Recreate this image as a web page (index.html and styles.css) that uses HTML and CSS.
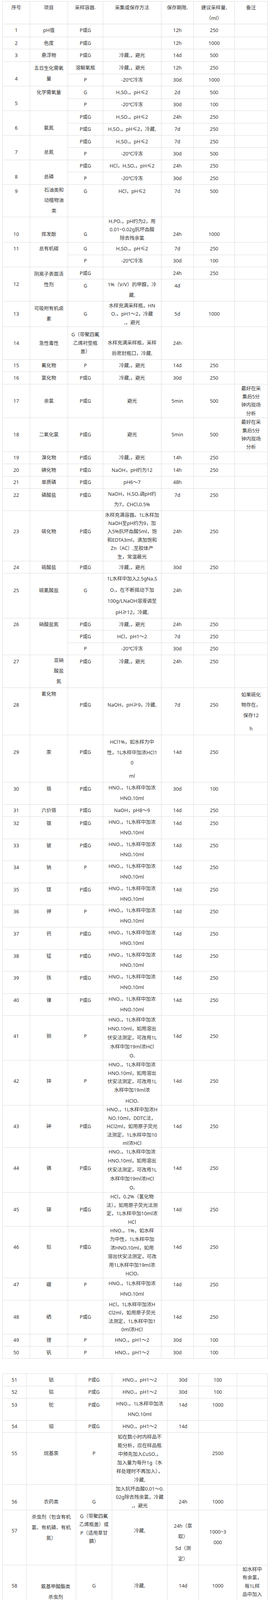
FILE: index.html
```html
<!DOCTYPE html>
<html lang="zh-CN">
<head>
<meta charset="utf-8">
<title>水样的保存和采样要求</title>
<link rel="stylesheet" href="styles.css">
</head>
<body>
<table class="tb t1">
<colgroup><col class="a1"><col class="a2"><col class="a3"><col class="a4"><col class="a5"><col class="a6"><col class="a7"></colgroup>
<tr><th>序号</th><th>项目</th><th>采样容器<sub>1</sub></th><th>采集或保存方法</th><th>保存期限<sub>2</sub></th><th>建议采样量<sub>3</sub><br>（ml）</th><th>备注</th></tr>
<tr class="r1"><td>1</td><td>pH值</td><td>P或G</td><td></td><td>12h</td><td>250</td><td></td></tr>
<tr><td>2</td><td>色度</td><td>P或G</td><td></td><td>12h</td><td>1000</td><td></td></tr>
<tr><td>3</td><td>悬浮物</td><td>P或G</td><td>冷藏<sub>a</sub>，避光</td><td>14d</td><td>500</td><td></td></tr>
<tr><td rowspan="2" class="bt">4</td><td rowspan="2" class="w">五日生化需氧<br>量</td><td>溶解氧瓶</td><td>冷藏<sub>a</sub>，避光</td><td>12h</td><td>250</td><td></td></tr>
<tr><td>P</td><td>-20℃冷冻</td><td>30d</td><td>1000</td><td></td></tr>
<tr><td rowspan="2" class="bt">5</td><td rowspan="2" class="tt">化学需氧量</td><td>G</td><td>H<sub>2</sub>SO<sub>4</sub>，pH≤2</td><td>2d</td><td>500</td><td></td></tr>
<tr><td>P</td><td>-20℃冷冻</td><td>30d</td><td>100</td><td></td></tr>
<tr><td rowspan="2" class="bt">6</td><td rowspan="2" class="bt">氨氮</td><td>P或G</td><td>H<sub>2</sub>SO<sub>4</sub>，pH≤2</td><td>24h</td><td>250</td><td></td></tr>
<tr><td>P或G</td><td>H<sub>2</sub>SO<sub>4</sub>，pH≤2，冷藏<sub>a</sub></td><td>7d</td><td>250</td><td></td></tr>
<tr><td rowspan="2" class="bt">7</td><td rowspan="2" class="bt">总氮</td><td>P或G</td><td>H<sub>2</sub>SO<sub>4</sub>，pH≤2</td><td>7d</td><td>250</td><td></td></tr>
<tr><td>P</td><td>-20℃冷冻</td><td>30d</td><td>500</td><td></td></tr>
<tr><td rowspan="2" class="bt">8</td><td rowspan="2" class="bt">总磷</td><td>P或G</td><td>HCl，H<sub>2</sub>SO<sub>4</sub>，pH≤2</td><td>24h</td><td>250</td><td></td></tr>
<tr><td>P</td><td>-20℃冷冻</td><td>30d</td><td>250</td><td></td></tr>
<tr class="t"><td>9</td><td class="w n rb"><span class="ib">石油类和<br>动植物油<br>类</span></td><td>G</td><td>HCl，pH≤2</td><td>7d</td><td>500</td><td></td></tr>
<tr class="r33"><td>10</td><td>挥发酚</td><td>G</td><td class="n">H<sub>3</sub>PO<sub>4</sub>，pH约为2，用<br>0.01~0.02g抗坏血酸<br>除去残余氯</td><td>24h</td><td>1000</td><td></td></tr>
<tr><td rowspan="2" class="tt">11</td><td rowspan="2" class="tt">总有机碳</td><td>G</td><td>H<sub>2</sub>SO<sub>4</sub>，pH≤2</td><td>7d</td><td>250</td><td></td></tr>
<tr><td>P</td><td>-20℃冷冻</td><td>30d</td><td>100</td><td></td></tr>
<tr><td rowspan="2">12</td><td rowspan="2" class="tt w">阴离子表面活<br>性剂</td><td>P或G</td><td></td><td>24h</td><td>250</td><td></td></tr>
<tr class="t"><td>G</td><td class="w n">1%（V/V）的甲醛，冷<br>藏<sub>a</sub></td><td>4d</td><td></td><td></td></tr>
<tr><td>13</td><td class="w">可吸附有机卤<br>素</td><td>G</td><td class="n">水样充满采样瓶，HN<br>O<sub>3</sub>，pH1～2，冷藏<br><sub>a</sub>，避光</td><td>5d</td><td>1000</td><td></td></tr>
<tr><td>14</td><td>急性毒性</td><td class="n">G（带聚四氟<br>乙烯衬垫瓶<br>盖）</td><td class="w n">&nbsp;<br>水样充满采样瓶，采样<br>后密封瓶口，冷藏<sub>a</sub></td><td>24h</td><td></td><td></td></tr>
<tr><td>15</td><td>氟化物</td><td>P</td><td>冷藏<sub>a</sub>，避光</td><td>14d</td><td>250</td><td></td></tr>
<tr><td>16</td><td>氯化物</td><td>P或G</td><td>冷藏<sub>a</sub>，避光</td><td>30d</td><td>250</td><td></td></tr>
<tr><td>17</td><td>余氯</td><td>P或G</td><td>避光</td><td>5min</td><td>500</td><td class="n">最好在采<br>集后5分<br>钟内现场<br>分析</td></tr>
<tr><td>18</td><td>二氧化氯</td><td>P或G</td><td>避光</td><td>5min</td><td>500</td><td class="n">最好在采<br>集后5分<br>钟内现场<br>分析</td></tr>
<tr><td>19</td><td>溴化物</td><td>P或G</td><td>冷藏<sub>a</sub>，避光</td><td>14h</td><td>250</td><td></td></tr>
<tr><td>20</td><td>碘化物</td><td>P或G</td><td>NaOH，pH约为12</td><td>14h</td><td>250</td><td></td></tr>
<tr><td>21</td><td>单质磷</td><td>P或G</td><td>pH6～7</td><td>48h</td><td></td><td></td></tr>
<tr class="t"><td>22</td><td>磷酸盐</td><td>P或G</td><td class="w n">NaOH，H<sub>2</sub>SO<sub>4</sub>调pH约<br>为7，CHCl<sub>3</sub>0.5%</td><td>7d</td><td>250</td><td></td></tr>
<tr class="r42"><td>23</td><td>硫化物</td><td>P或G</td><td class="n">水样充满容器。1L水样加<br>NaOH至pH约为9，加<br>入5%抗坏血酸5ml，饱<br>和EDTA3ml，滴加饱和<br>Zn（AC）<sub>2</sub>至胶体产<br>生，常温蔽光</td><td>24h</td><td>250</td><td></td></tr>
<tr><td>24</td><td>硫酸盐</td><td>P或G</td><td>冷藏<sub>a</sub>，避光</td><td>30d</td><td>250</td><td></td></tr>
<tr class="r33"><td>25</td><td>硫氰酸盐</td><td>G</td><td class="x n">1L水样中加入2.5gNa<sub>2</sub>S<br>O<sub>3</sub>，在不断摇动下加<br>100g/LNaOH溶液调至<br>pH≥12，冷藏<sub>a</sub></td><td>24h</td><td></td><td></td></tr>
<tr><td rowspan="3" class="tt">26</td><td rowspan="3" class="tt">硝酸盐氮</td><td>P或G</td><td>冷藏<sub>a</sub>，避光</td><td>24h</td><td>250</td><td></td></tr>
<tr><td>P或G</td><td>HCl，pH1～2</td><td>7d</td><td>250</td><td></td></tr>
<tr><td>P</td><td>-20℃冷冻</td><td>30d</td><td>250</td><td></td></tr>
<tr class="t"><td>27</td><td class="w n rb"><span class="ib">亚硝<br>酸盐<br>氮</span></td><td>P或G</td><td>冷藏<sub>a</sub>，避光</td><td>24h</td><td>250</td><td></td></tr>
<tr class="r33"><td>28</td><td class="tt">氰化物</td><td>P或G</td><td>NaOH，pH≥9，冷藏<sub>a</sub></td><td>7d</td><td>250</td><td class="w n pt">如果硫化<br>物存在，<br>保存12<span class="gap">h</span></td></tr>
<tr class="r33"><td>29</td><td>汞</td><td>P或G</td><td class="w n pt">HCl1%，如水样为中<br>性，1L水样中加浓HCl1<br>0<span class="gap">ml</span></td><td>14d</td><td>250</td><td></td></tr>
<tr class="t"><td>30</td><td>铬</td><td>P或G</td><td class="w n">HNO<sub>3</sub>，1L水样中加浓<br>HNO<sub>3</sub>10ml</td><td>30d</td><td>100</td><td></td></tr>
<tr><td>31</td><td>六价铬</td><td>P或G</td><td>NaOH，pH8～9</td><td>14d</td><td>250</td><td></td></tr>
<tr class="t"><td>32</td><td>银</td><td>P或G</td><td class="w n">HNO<sub>3</sub>，1L水样中加浓<br>HNO<sub>3</sub>10ml</td><td>14d</td><td>250</td><td></td></tr>
<tr class="t"><td>33</td><td>铍</td><td>P或G</td><td class="w n">HNO<sub>3</sub>，1L水样中加浓<br>HNO<sub>3</sub>10ml</td><td>14d</td><td>250</td><td></td></tr>
<tr class="t"><td>34</td><td>钠</td><td>P</td><td class="w n">HNO<sub>3</sub>，1L水样中加浓<br>HNO<sub>3</sub>10ml</td><td>14d</td><td>250</td><td></td></tr>
<tr class="t"><td>35</td><td>镁</td><td>P或G</td><td class="w n">HNO<sub>3</sub>，1L水样中加浓<br>HNO<sub>3</sub>10ml</td><td>14d</td><td>250</td><td></td></tr>
<tr class="t"><td>36</td><td>钾</td><td>P</td><td class="w n">HNO<sub>3</sub>，1L水样中加浓<br>HNO<sub>3</sub>10ml</td><td>14d</td><td>250</td><td></td></tr>
<tr class="t"><td>37</td><td>钙</td><td>P或G</td><td class="w n">HNO<sub>3</sub>，1L水样中加浓<br>HNO<sub>3</sub>10ml</td><td>14d</td><td>250</td><td></td></tr>
<tr class="t"><td>38</td><td>锰</td><td>P或G</td><td class="w n">HNO<sub>3</sub>，1L水样中加浓<br>HNO<sub>3</sub>10ml</td><td>14d</td><td>250</td><td></td></tr>
<tr class="t"><td>39</td><td>铁</td><td>P或G</td><td class="w n">HNO<sub>3</sub>，1L水样中加浓<br>HNO<sub>3</sub>10ml</td><td>14d</td><td>250</td><td></td></tr>
<tr class="t"><td>40</td><td>镍</td><td>P或G</td><td class="w n">HNO<sub>3</sub>，1L水样中加浓<br>HNO<sub>3</sub>10ml</td><td>14d</td><td>250</td><td></td></tr>
<tr class="r42"><td>41</td><td>铜</td><td>P</td><td class="g n">HNO<sub>3</sub>，1L水样中加浓<br>HNO<sub>3</sub>10ml，如用溶出<br>伏安法测定，可改用1L<br>水样中加19ml浓HCl<br>O<sub>4</sub></td><td>14d</td><td>250</td><td></td></tr>
<tr class="r42"><td>42</td><td>锌</td><td>P</td><td class="n">HNO<sub>3</sub>，1L水样中加浓<br>HNO<sub>3</sub>10ml，如用溶出<br>伏安法测定，可改用1L<br>水样中加19ml浓<span class="gap">HClO<sub>4</sub></span></td><td>14d</td><td>250</td><td></td></tr>
<tr><td>43</td><td>砷</td><td>P或G</td><td class="n">HNO<sub>3</sub>，1L水样中加浓H<br>NO<sub>3</sub>10ml，DDTC法，<br>HCl2ml，如用原子荧光<br>法测定，1L水样中加10<br>ml浓HCl</td><td>14d</td><td>250</td><td></td></tr>
<tr class="r42"><td>44</td><td>镉</td><td>P或G</td><td class="g n">HNO<sub>3</sub>，1L水样中加浓<br>HNO<sub>3</sub>10ml，如用溶出<br>伏安法测定，可改用1L<br>水样中加19ml浓HCl<br>O<sub>4</sub></td><td>14d</td><td>250</td><td></td></tr>
<tr><td>45</td><td>锑</td><td>P或G</td><td class="n">HCl，0.2%（氢化物<br>法），如用原子荧光法测<br>定，1L水样中加10ml浓<br>HCl</td><td>14d</td><td>250</td><td></td></tr>
<tr class="r42"><td>46</td><td>铅</td><td>P或G</td><td class="k n">HNO<sub>3</sub>，1%，如水样<br>为中性，1L水样中加<br>浓HNO<sub>3</sub>10ml，如用<br>溶出伏安法测定，可改<br>用1L水样中加19ml浓<br>HClO<sub>4</sub></td><td>14d</td><td>250</td><td></td></tr>
<tr class="t"><td>47</td><td>硼</td><td>P</td><td class="w n">HNO<sub>3</sub>，1L水样中加浓<br>HNO<sub>3</sub>10ml</td><td>14d</td><td>250</td><td></td></tr>
<tr><td>48</td><td>硒</td><td>P或G</td><td class="n">HCl，1L水样中加浓H<br>Cl2ml，如用原子荧光<br>法测定，1L水样中加1<br>0ml浓HCl</td><td>14d</td><td>250</td><td></td></tr>
<tr><td>49</td><td>锂</td><td>P</td><td>HNO<sub>3</sub>，pH1～2</td><td>30d</td><td>100</td><td></td></tr>
<tr><td>50</td><td>钒</td><td>P</td><td>HNO<sub>3</sub>，pH1～2</td><td>30d</td><td>100</td><td></td></tr>
</table>

<table class="tb t2">
<colgroup><col class="b1"><col class="b2"><col class="b3"><col class="b4"><col class="b5"><col class="b6"><col class="b7"></colgroup>
<tr><td>51</td><td>钴</td><td>P或G</td><td>HNO<sub>3</sub>，pH1～2</td><td>30d</td><td>100</td><td></td></tr>
<tr><td>52</td><td>铝</td><td>P或G</td><td>HNO<sub>3</sub>，pH1～2</td><td>30d</td><td>100</td><td></td></tr>
<tr class="t"><td>53</td><td>铊</td><td>P或G</td><td class="w n">HNO<sub>3</sub>，1L水样中加浓<br>HNO<sub>3</sub>10ml</td><td>14d</td><td>1000</td><td></td></tr>
<tr><td>54</td><td>钼</td><td>P或G</td><td>HNO<sub>3</sub>，pH1～2</td><td>14d</td><td></td><td></td></tr>
<tr class="r42"><td>55</td><td>烷基汞</td><td>P</td><td class="k n">如在数小时内样品不<br>能分析，应在样品瓶<br>中预先加入CuSO<sub>4</sub>，<br>加入量为每升1g（水<br>样处理时不再加入），<br>冷藏<sub>a</sub></td><td></td><td>2500</td><td></td></tr>
<tr class="r33"><td>56</td><td>农药类</td><td>G</td><td class="n">加入抗坏血酸0.01～0.<br>02g除去残余氯，冷藏<br><sub>a</sub>，避光</td><td>24h</td><td>1000</td><td></td></tr>
<tr class="r42"><td>57</td><td class="tt w">杀虫剂（包含有机<br>氯、有机磷、有机<br>氮）</td><td class="tt">G（带聚四氟<br>乙烯瓶盖）或<br>P（适用草甘<br>膦）</td><td>冷藏<sub>a</sub></td><td class="w n">&nbsp;<br>24h（萃<br>取）<span class="gap4">5d（测</span>定）</td><td class="m w">1000~3<br>000</td><td></td></tr>
<tr class="r42"><td>58</td><td class="w rb rb2"><span class="ib">氨基甲酸酯类<br>杀虫剂</span></td><td>G</td><td>冷藏<sub>a</sub></td><td>14d</td><td>1000</td><td class="n">如水样中<br>有余氯，<br>每1L样<br>品中加入<br>80mgN<br>a<sub>2</sub>S<sub>2</sub>O<sub>3</sub><br>·5H<sub>2</sub>O</td></tr>
<tr class="r33"><td>59</td><td>除草剂类</td><td>G</td><td class="n">加入抗坏血酸0.01～0.<br>02g除去残余氯，冷藏<br><sub>a</sub>，避光</td><td>24h</td><td>1000</td><td></td></tr>
<tr class="r33"><td>60</td><td class="w rb"><span class="ib">挥发性有机<br>物</span></td><td>G</td><td class="x n">用1+10HCl调至pH约<br>为2，加入0.01～0.02<br>g<br>抗坏血酸除去残余氯，<br>冷藏<sub>a</sub>，避光</td><td>12h</td><td>1000</td><td></td></tr>
<tr class="r67"><td>61</td><td class="w rb pm"><span class="ib">挥发性卤代<br>烃</span></td><td class="pb">G（棕色，带<br>聚四氟乙烯<br>瓶盖）</td><td class="k n">如果水样含有余氯，<br>向采样瓶中加入0.3～<br>0.5g抗坏血酸或Na<sub>2</sub>S<br><sub>2</sub>O<sub>3</sub>·5H<sub>2</sub>O。采样时<br>样品沿瓶壁注入，防<br>止气泡产生，水样充<br>满后不留液上空间，<br>冷藏<sub>a</sub></td><td>7d</td><td>40</td><td class="w pm">所有样品<br>均采集平<br>行样</td></tr>
<tr class="r33"><td>62</td><td>甲醛</td><td>G</td><td class="n">加入0.2～0.5g/LNa<sub>2</sub><br>S<sub>2</sub>O<sub>3</sub>·5H<sub>2</sub>O除去残<br>余氯，冷藏<sub>a</sub>，避光</td><td>24h</td><td>250</td><td></td></tr>
<tr><td>63</td><td>三氯乙醛</td><td>G</td><td>中性条件下冷藏<sub>a</sub></td><td>3d</td><td></td><td></td></tr>
<tr class="r67"><td>64</td><td>丙烯醛</td><td class="pb">G（棕色，带<br>聚四氟乙烯<br>衬垫瓶盖）</td><td class="k n">采样前须加入0.3g抗<br>坏血酸于样品瓶中；采<br>集样品时，应使水样在<br>样品瓶中溢流而不留气<br>泡，再加入数滴1+9<br>(V/V)H<sub>3</sub>PO<sub>4</sub>溶液固<br>定，使样品的pH值为<br>4~5，冷藏<sub>a</sub>，避光</td><td>5d</td><td>40</td><td></td></tr>
<tr><td>65</td><td>三乙胺</td><td>G</td><td></td><td>24h</td><td></td><td></td></tr>
<tr class="r33"><td>66</td><td>丙烯酰胺</td><td class="tt">G（棕色，带<br>聚四氟乙烯<br>衬垫瓶盖）</td><td>冷藏<sub>a</sub>，避光</td><td class="w n">7d（萃<br>取）<span class="gap4">30d（测</span>定）</td><td>250</td><td></td></tr>
<tr class="t"><td>67</td><td>酚类</td><td>G</td><td class="w n">H<sub>3</sub>PO<sub>4</sub>，pH约为2，用<br>0.01～0.02g抗坏血酸<br>除去残余氯，冷藏<sub>a</sub>，<br>避光</td><td>24h</td><td>1000</td><td></td></tr>
<tr class="r33"><td>68</td><td class="w n rb rb2"><span class="ib">&nbsp;<br>邻苯二甲酸<br>酯类</span></td><td>G</td><td class="tt">加入抗坏血酸0.01～0.<br>02g除去残余氯，冷藏<br><sub>a</sub>，避光</td><td>24h</td><td>1000</td><td></td></tr>
<tr><td>69</td><td>肼</td><td>G</td><td>HCl，pH约为1，避光</td><td>24h</td><td>500</td><td></td></tr>
<tr class="t"><td>70</td><td>苯系物</td><td>G</td><td class="w n">水样充满容器，并加盖<br>瓶塞，冷藏<sub>a</sub></td><td>14d</td><td></td><td></td></tr>
<tr class="r33"><td>71</td><td>氯苯</td><td>G</td><td class="n n2">水样充满容器，并加<br>盖瓶塞，不得有气<br>泡。冷藏<sub>a</sub></td><td>7d</td><td>1000</td><td></td></tr>
<tr class="r42"><td>72</td><td>多氯联苯</td><td class="pa">G（带聚四氟<br>乙烯瓶盖）</td><td>冷藏<sub>a</sub></td><td>7d</td><td>1000</td><td class="n">如水样中<br>有余氯，<br>每1L样<br>品中加入<br>80mgN<br>a<sub>2</sub>S<sub>2</sub>O<sub>3</sub><br>·5H<sub>2</sub>O</td></tr>
<tr class="r42"><td>73</td><td>多环芳烃</td><td class="pa">G（带聚四氟<br>乙烯瓶盖）</td><td>冷藏<sub>a</sub></td><td>7d</td><td>500</td><td class="n">如水样中<br>有余氯，<br>每1L样<br>品中加入<br>80mgN<br>a<sub>2</sub>S<sub>2</sub>O<sub>3</sub><br>·5H<sub>2</sub>O</td></tr>
<tr class="r42"><td>74</td><td>二噁英类</td><td class="g n">对二噁英类<br>无吸附作用<br>不锈钢或玻<br>璃材质可密<br>封器具</td><td class="w">4～10℃的暗冷处，密<br>封遮光</td><td></td><td></td><td class="w">尽快进行<br>分析测定</td></tr>
<tr class="r33"><td>75</td><td>吡啶</td><td>G</td><td class="k n">水样充满容器，赶出<br>气泡，塞紧瓶塞（瓶<br>塞不能使用橡皮塞或木<br>塞），冷藏<sub>a</sub></td><td>48h</td><td></td><td></td></tr>
<tr class="r33"><td>76</td><td class="w">梯恩梯、黑索<br>今、地恩梯</td><td>G（棕色）</td><td>冷藏<sub>a</sub>，避光</td><td class="w n">7d（萃<br>取）<span class="gap4">30d（测</span>定）</td><td></td><td></td></tr>
<tr class="r42"><td>77</td><td class="w rb rb2"><span class="ib">彩色显影剂<br>总量</span></td><td>G（棕色）</td><td class="n">水样充满容器，避免<br>光、热和剧烈振动；<br>按1L样品中加入0.1g<br>Na<sub>2</sub>SO<sub>3</sub>的比例加入保<br>护剂，冷藏<sub>a</sub></td><td>48h</td><td></td><td></td></tr>
<tr class="r33"><td>78</td><td class="w rb"><span class="ib">显影剂及其氧化<br>物总量</span></td><td class="w">G（棕色）或<br>P</td><td class="n">避免光、热和剧烈振<br>动；按1L样品中加入<br>0.1gNa<sub>2</sub>SO<sub>3</sub>的比例<br>加入保护剂，冷藏<sub>a</sub></td><td>48h</td><td></td><td></td></tr>
<tr class="r67"><td>79</td><td class="tt k">总大肠菌群和粪<br>大肠菌群、细菌<br>总数、大肠菌总<br>数、粪大肠菌、<br>粪链球菌、沙门<br>氏菌、志贺氏菌<br>等</td><td class="m w">G（灭菌）或<br>无菌袋</td><td class="m k">与其他项目一同采样<br>时，先单独采集微生<br>物样品，不预洗采样<br>瓶，冷藏<sub>a</sub>，避光，样<br>品采集至采样瓶体积<br>的80%左右，冷藏<sub>a</sub></td><td>6h</td><td>250</td><td class="n l21"><span class="sp"></span>如水样中<br>有余氯，<br>每1L样<br>品中加入<br>80mgN<br>a<sub>2</sub>S<sub>2</sub>O<sub>3</sub><br>·5H<sub>2</sub>O</td></tr>
<tr class="t"><td>80</td><td>蛔虫卵</td><td>P</td><td class="w n">常温下运回实验室，立<br>即进行过滤和沉淀</td><td></td><td>10L</td><td></td></tr>
<tr class="t"><td>81</td><td class="w rb rb2"><span class="ib">总α放射性、总<br>β放射性</span></td><td>P</td><td class="w">HNO<sub>3</sub>，1L水样中加浓<br>HNO<sub>3</sub>10ml</td><td>30d</td><td>2000</td><td class="w n">如果样品<br>已蒸发，<br>不酸化</td></tr>
<tr><td>82</td><td>铀</td><td>P</td><td></td><td>30d</td><td>2000</td><td></td></tr>
<tr><td colspan="7" class="nt">注1：P为聚乙烯瓶等材质塑料容器，G为硬质玻璃容器。<br>注2：h：小时；d：天。<br>注3：每个监测项目的建议采样量应保证满足分析所需的最小采样量，同时考虑重复分析和质量控制等的需要。</td></tr>
<tr><td colspan="7" class="nt2"><sub>a</sub>冷藏温度范围为：0~5℃。</td></tr>
</table>
</body>
</html>
```

FILE: styles.css
```css
html, body {
  margin: 0;
  background: #fff;
}

body {
  padding: 3px 2px 0 6px;
  font-family: "Noto Sans", "Noto Sans CJK SC", sans-serif;
  font-size: 12.5px;
  color: #333;
}

.tb {
  border-collapse: collapse;
  table-layout: fixed;
  width: 678px;
  border: 1px solid #d2d2d2;
}

.t2 {
  margin-top: 38px;
}

.t1 .a1 { width: 70px; }
.t1 .a2 { width: 97px; }
.t1 .a3 { width: 90px; }
.t1 .a4 { width: 149px; }
.t1 .a5 { width: 83px; }
.t1 .a6 { width: 105px; }
.t1 .a7 { width: 84px; }

.t2 .b1 { width: 61px; }
.t2 .b2 { width: 127px; }
.t2 .b3 { width: 92px; }
.t2 .b4 { width: 142px; }
.t2 .b5 { width: 80px; }
.t2 .b6 { width: 98px; }
.t2 .b7 { width: 78px; }

.tb td,
.tb th {
  border: 1px solid #ddd;
  padding: 4.5px 3px;
  line-height: 21.4px;
  text-align: center;
  vertical-align: middle;
  white-space: nowrap;
  font-weight: normal;
}

.tb th {
  vertical-align: top;
  padding: 3px 3px 0;
  line-height: 26.8px;
}

tr.r1 > td { padding-top: 5.5px; padding-bottom: 5.5px; }

sub {
  font-size: 6px;
  line-height: 0;
  vertical-align: -1px;
  color: #555;
}

/* row level vertical placement */
tr.t > td { vertical-align: top; padding-top: 6px; }
tr.r33 > td { vertical-align: top; padding-top: 33px; }
tr.r42 > td { vertical-align: top; padding-top: 42px; }
tr.r67 > td { vertical-align: top; padding-top: 67px; }

/* cell overrides */
tr > td.m { vertical-align: middle; padding-top: 4.5px; padding-bottom: 4.5px; }
tr > td.tt { vertical-align: top; padding-top: 5px; }
tr > td.bt { vertical-align: bottom; padding-bottom: 8px; }
tr > td.pa { vertical-align: top; padding-top: 30px; }
tr > td.pb { vertical-align: top; padding-top: 38px; }
tr > td.pm { vertical-align: top; padding-top: 58px; }
tr > td.n { vertical-align: middle; padding-top: 0; padding-bottom: 0; }
tr > td.n.w { padding-top: 1px; padding-bottom: 1px; }
tr > td.n.n2 { padding-top: 2px; padding-bottom: 2px; }
tr > td.n.pt { vertical-align: top; padding-top: 5px; }

/* line heights */
.tb td.w { line-height: 26.8px; }
.tb td.x { line-height: 28.4px; }
.tb td.g { line-height: 22.8px; }
.tb td.k { line-height: 21.9px; }
.tb td.l21 { line-height: 21px; }

/* right-leaning blocks in the item column */
.tb td.rb { text-align: right; padding-right: 10px; }
.tb td.rb2 { padding-right: 14px; }
.ib {
  display: inline-block;
  text-align: center;
  vertical-align: top;
}

.gap { display: block; margin-top: 7px; }
.gap4 { display: block; margin-top: 4px; }
.sp { display: block; height: 24px; }

.tb td.nt {
  text-align: left;
  padding: 0 7px;
  line-height: 17.9px;
}

.tb td.nt2 {
  text-align: left;
  padding: 4.5px 7px;
  border-top: 2px solid #d6d6d6;
}
```
